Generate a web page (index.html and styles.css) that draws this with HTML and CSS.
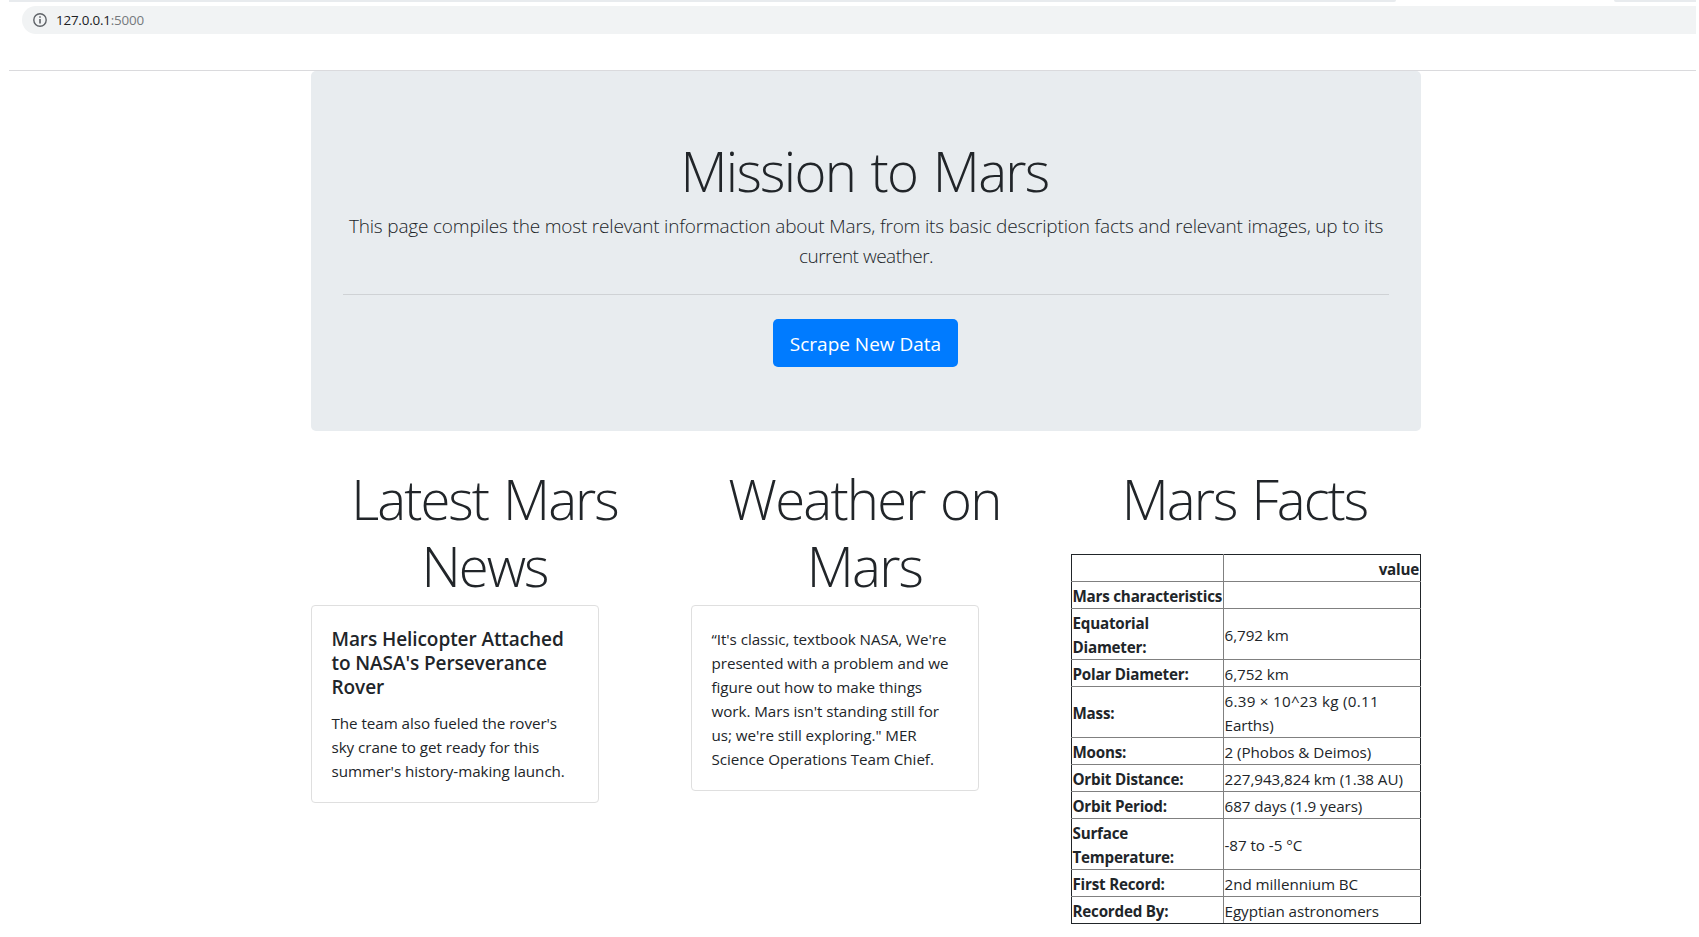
FILE: index.html
```html
<!DOCTYPE html>
<html lang="en">
<head>
<meta charset="utf-8">
<title>Mission to Mars</title>
<link rel="stylesheet" href="styles.css">
</head>
<body>
<header class="chrome">
  <div class="tabs"><div class="tab-edge tab-main"></div><div class="tab-edge tab-end"></div></div>
  <div class="omnibox">
    <svg class="info" viewBox="0 0 14 14" width="14" height="14"><circle cx="7" cy="7" r="6.2" fill="none" stroke="#5f6368" stroke-width="1.4"/><path d="M6.2 3.2h1.6v1.6H6.2zM6.2 6h1.6v4.6H6.2z" fill="#5f6368"/></svg>
    <span class="url">127.0.0.1<span class="port">:5000</span></span>
  </div>
</header>
<main class="container">
  <section class="jumbotron">
    <h1 class="display title">Mission to Mars</h1>
    <p class="lead">This page compiles the most relevant informaction about Mars, from its basic description facts and relevant images, up to its<br><span class="lead-end">current weather.</span></p>
    <hr class="rule">
    <a class="btn">Scrape New Data</a>
  </section>
  <section class="row">
    <div class="col">
      <h1 class="display">Latest Mars<br>News</h1>
      <article class="card">
        <h5 class="card-title">Mars Helicopter Attached<br>to NASA's Perseverance<br>Rover</h5>
        <p class="card-text">The team also fueled the rover's<br>sky crane to get ready for this<br>summer's history-making launch.</p>
      </article>
    </div>
    <div class="col">
      <h1 class="display weather">Weather on<br>Mars</h1>
      <article class="card">
        <p class="card-text">“It's classic, textbook NASA, We're<br>presented with a problem and we<br>figure out how to make things<br>work. Mars isn't standing still for<br>us; we're still exploring." MER<br>Science Operations Team Chief.</p>
      </article>
    </div>
    <div class="col">
      <h1 class="display">Mars Facts</h1>
      <table class="facts">
        <colgroup><col class="key"><col></colgroup>
        <thead>
          <tr class="head"><th></th><th>value</th></tr>
          <tr><th>Mars characteristics</th><th></th></tr>
        </thead>
        <tbody>
          <tr><th>Equatorial<br>Diameter:</th><td>6,792 km</td></tr>
          <tr><th>Polar Diameter:</th><td>6,752 km</td></tr>
          <tr><th>Mass:</th><td><span class="mass">6.39 × 10^23 kg (0.11</span><br>Earths)</td></tr>
          <tr><th>Moons:</th><td>2 (Phobos &amp; Deimos)</td></tr>
          <tr><th>Orbit Distance:</th><td>227,943,824 km (1.38 AU)</td></tr>
          <tr><th>Orbit Period:</th><td>687 days (1.9 years)</td></tr>
          <tr><th>Surface<br>Temperature:</th><td>-87 to -5 °C</td></tr>
          <tr><th>First Record:</th><td>2nd millennium BC</td></tr>
          <tr class="last"><th>Recorded By:</th><td>Egyptian astronomers</td></tr>
        </tbody>
      </table>
    </div>
  </section>
</main>
</body>
</html>
```
FILE: styles.css
```css
* { box-sizing: border-box; }
body {
  margin: 0;
  background: #fff;
  color: #212529;
  font-family: "Segoe UI", "Open Sans", "Noto Sans", sans-serif;
  font-size: 15.2px;
  letter-spacing: -0.05px;
  line-height: 24px;
  overflow: hidden;
}
.chrome {
  height: 71px;
  margin: 0 3px 0 9px;
  border-bottom: 1px solid #dadadd;
}
.tabs { display: flex; justify-content: space-between; height: 6px; }
.tab-edge { height: 2px; background: #e8ebee; }
.tab-main { width: 1387px; border-bottom-right-radius: 3px; }
.tab-end { width: 82px; border-bottom-left-radius: 3px; }
.omnibox {
  display: flex;
  align-items: center;
  gap: 9px;
  height: 28px;
  margin-left: 13px;
  padding-left: 11px;
  background: #f1f3f4;
  border-radius: 14px 0 0 14px;
}
.url { font-size: 13.4px; letter-spacing: -0.2px; color: #202124; }
.port { color: #75797d; }
.container { width: 1110px; margin-left: 311px; }
.jumbotron {
  height: 360px;
  padding: 64px 32px;
  background: #e8ecef;
  border-radius: 5px;
  text-align: center;
}
.display {
  margin: 0 0 5px;
  padding: 3px 3px 0 0;
  font-size: 54.5px;
  font-weight: 300;
  letter-spacing: -2px;
  word-spacing: 3px;
  line-height: 67.2px;
  text-align: center;
  white-space: nowrap;
}
.title { letter-spacing: -1.7px; }
.weather { letter-spacing: -1.8px; }
.lead {
  margin: 0 0 23px;
  padding-top: 1px;
  font-size: 19px;
  font-weight: 300;
  letter-spacing: -0.18px;
  line-height: 30px;
  white-space: nowrap;
}
.lead-end { letter-spacing: -0.5px; }
.rule { height: 1px; margin: 0 0 24px; border: 0; background: #cfd2d5; }
.btn {
  display: inline-block;
  width: 185px;
  height: 48px;
  margin-right: 1px;
  border-radius: 5px;
  background: #007bff;
  color: #fff;
  font-size: 19px;
  letter-spacing: 0;
  line-height: 50px;
  white-space: nowrap;
}
.row { display: grid; grid-template-columns: repeat(3, 350px); gap: 30px; padding-top: 32px; }
.card {
  width: 288px;
  padding: 21px 19px 19px 19.5px;
  border: 1px solid #dfdfdf;
  border-radius: 4px;
  white-space: nowrap;
}
.card-title { margin: 0 0 12px; font-size: 19px; font-weight: 600; letter-spacing: -0.08px; line-height: 24px; }
.card-text { margin: 0; }
.facts {
  width: 350px;
  margin-top: 21px;
  border-collapse: collapse;
  table-layout: fixed;
  white-space: nowrap;
}
.facts th, .facts td { height: 27px; padding: 2px 1px 0; border: 1px solid #808080; text-align: left; }
.facts td { padding-left: 0.5px; }
.facts th { font-weight: 700; letter-spacing: -0.22px; }
.facts tr > :first-child { padding-left: 0.5px; border-left-color: #212529; }
.facts tr > :last-child { border-right-color: #212529; }
.facts .head th { border-top-color: #212529; }
.facts .head th:last-child { text-align: right; }
.facts .last > * { border-bottom-color: #212529; }
.facts .mass { letter-spacing: 0.27px; }
.key { width: 152px; }
```
